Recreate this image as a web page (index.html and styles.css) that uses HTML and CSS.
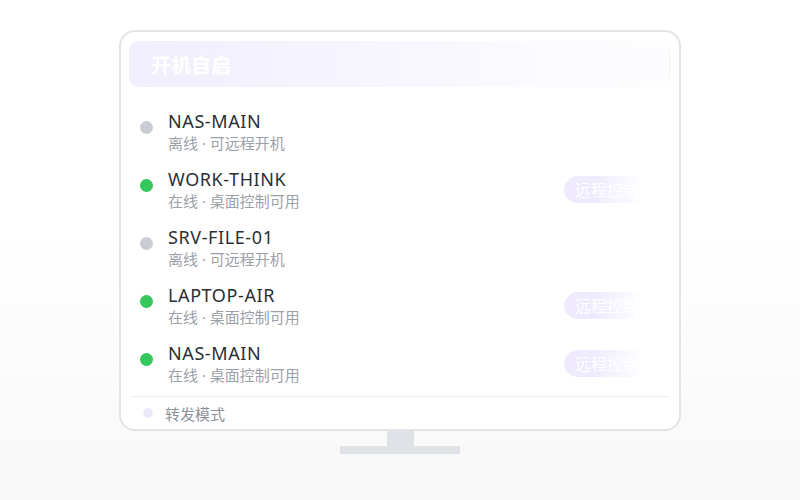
FILE: index.html
```html
<!doctype html>
<html>
<head>
    <meta charset="UTF-8">
    <title>开机自启</title>
    <link rel="stylesheet" href="styles.css">
</head>
<body>
    <div class="monitor">
        <div class="screen">
            <div class="screen-header">
                <h1>开机自启</h1>
            </div>

            <div class="device-list">
                <div class="device">
                    <span class="dot offline"></span>
                    <div class="info">
                        <div class="name">NAS-MAIN</div>
                        <div class="status">离线 · 可远程开机</div>
                    </div>
                </div>
                <div class="device">
                    <span class="dot online"></span>
                    <div class="info">
                        <div class="name">WORK-THINK</div>
                        <div class="status">在线 · 桌面控制可用</div>
                    </div>
                    <button class="remote-btn">远程控制</button>
                </div>
                <div class="device">
                    <span class="dot offline"></span>
                    <div class="info">
                        <div class="name">SRV-FILE-01</div>
                        <div class="status">离线 · 可远程开机</div>
                    </div>
                </div>
                <div class="device">
                    <span class="dot online"></span>
                    <div class="info">
                        <div class="name">LAPTOP-AIR</div>
                        <div class="status">在线 · 桌面控制可用</div>
                    </div>
                    <button class="remote-btn">远程控制</button>
                </div>
                <div class="device">
                    <span class="dot online"></span>
                    <div class="info">
                        <div class="name">NAS-MAIN</div>
                        <div class="status">在线 · 桌面控制可用</div>
                    </div>
                    <button class="remote-btn">远程控制</button>
                </div>
            </div>

            <div class="screen-footer">
                <span class="mode-dot"></span>
                <span>转发模式</span>
            </div>
        </div>
        <div class="stand-neck"></div>
        <div class="stand-base"></div>
    </div>
</body>
</html>
```

FILE: styles.css
```css
body {
    margin: 0;
    height: 500px;
    font-family: "Noto Sans", "Noto Sans CJK SC", sans-serif;
    background: linear-gradient(to bottom, #fff 0, #fff 45%, #f8f8f9 100%);
}
.monitor {
    width: 562px;
    margin: 0 auto;
    padding-top: 30px;
    display: flex;
    flex-direction: column;
    align-items: center;
}
.screen {
    position: relative;
    box-sizing: border-box;
    width: 562px;
    height: 401px;
    border: 2px solid #e2e4e8;
    border-radius: 16px;
    background: #fff;
    padding: 9px 9px 0 8px;
}
.screen-header {
    position: relative;
    height: 46px;
    border-radius: 10px;
    background: linear-gradient(to right, #f1eefd 0%, #f7f5fe 45%, #fcfbff 80%, #fdfdff 100%);
    display: flex;
    align-items: center;
    padding-left: 22px;
}
.screen-header::after {
    content: "";
    position: absolute;
    right: 0;
    top: 9px;
    height: 28px;
    width: 1px;
    background: #eef0f3;
}
.screen-header h1 {
    margin: 0;
    font-family: "Noto Sans CJK SC", sans-serif;
    font-size: 20px;
    font-weight: bold;
    color: #fff;
}
.device-list {
    padding: 23px 0 0 10px;
    display: flex;
    flex-direction: column;
    gap: 14px;
}
.device {
    display: flex;
    align-items: flex-start;
    height: 44px;
    padding-right: 20px;
}
.dot {
    width: 13px;
    height: 13px;
    border-radius: 50%;
    margin: 11px 15px 0 1px;
    flex-shrink: 0;
}
.dot.offline {
    background: #c9ccd2;
}
.dot.online {
    background: #34c759;
}
.info {
    flex: 1;
}
.name {
    font-size: 18px;
    line-height: 22px;
    letter-spacing: 0.6px;
    color: #2b2f36;
}
.status {
    font-family: "Noto Sans", "Noto Sans CJK SC", sans-serif;
    font-size: 15px;
    line-height: 22px;
    color: #9ba1a9;
}
.remote-btn {
    align-self: center;
    margin-top: -2px;
    height: 27px;
    width: 86px;
    padding: 0 11px;
    border: none;
    border-radius: 14px;
    background: #efeafd;
    color: #fff;
    font-family: "Liberation Serif", "Noto Sans CJK SC", serif;
    font-size: 16px;
    text-align: left;
    white-space: nowrap;
    overflow: hidden;
    -webkit-mask-image: linear-gradient(to right, #000 35%, transparent 92%);
    mask-image: linear-gradient(to right, #000 35%, transparent 92%);
}
.screen-footer {
    margin: 10px 0 0 2px;
    border-top: 1px solid #eceef1;
    height: 32px;
    display: flex;
    align-items: center;
    padding-left: 12px;
    font-family: "Noto Sans CJK SC", sans-serif;
    font-size: 15px;
    color: #8d929a;
}
.mode-dot {
    width: 10px;
    height: 10px;
    border-radius: 50%;
    background: #ece8fb;
    margin-right: 12px;
}
.stand-neck {
    width: 27px;
    height: 15px;
    background: #dfe2e6;
}
.stand-base {
    width: 120px;
    height: 8px;
    background: #dfe2e6;
}
```
